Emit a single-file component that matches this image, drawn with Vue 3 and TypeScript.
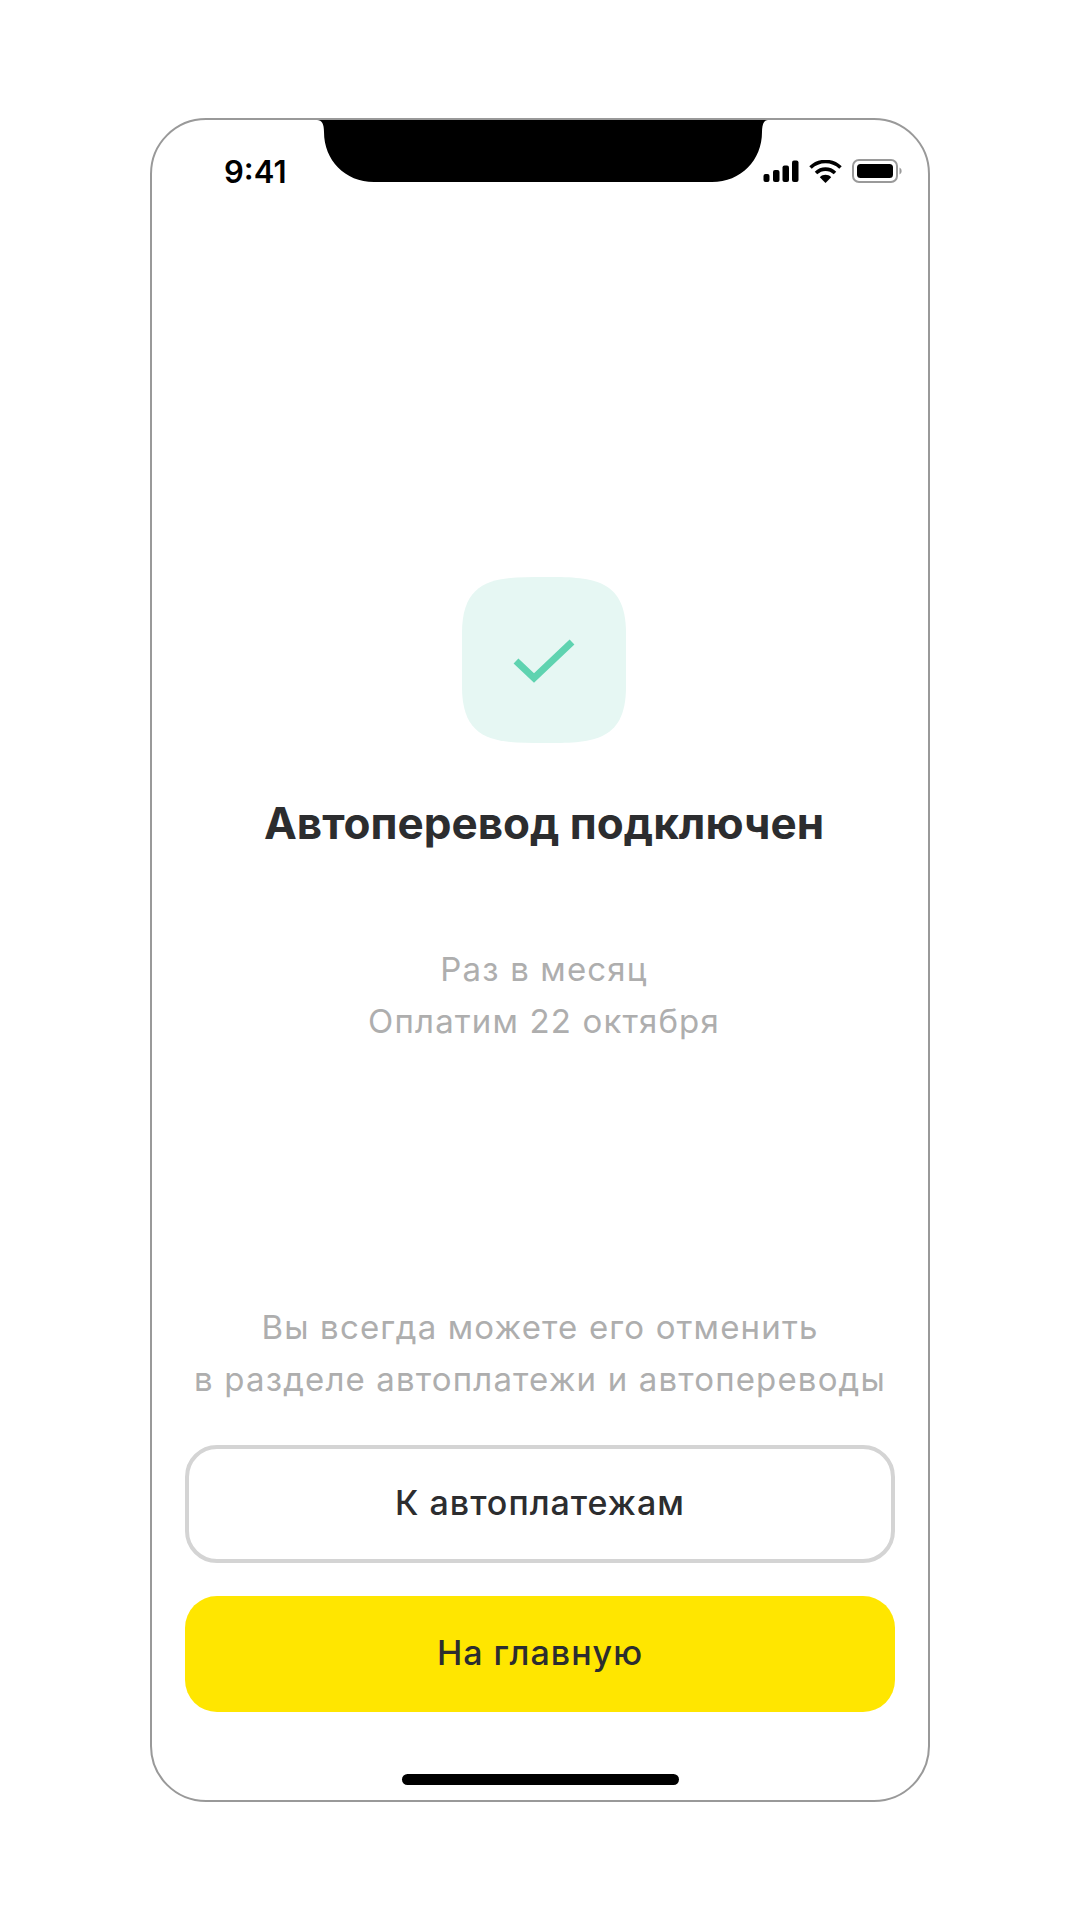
<script setup lang="ts">
const title = "Автоперевод подключен"
const schedule = ["Раз в месяц", "Оплатим 22 октября"]
const hint = ["Вы всегда можете его отменить", "в разделе автоплатежи и автопереводы"]
</script>

<template>
  <div class="page">
    <div class="phone">
      <svg class="notch" width="451" height="62" viewBox="0 0 451 62">
        <path d="M0 0 C5 0 7 4 7 12 C7 40 28 62 57 62 H395 C424 62 445 40 445 12 C445 4 447 0 451 0 Z" />
      </svg>

      <div class="status">
        <span class="time">9:41</span>
        <div class="status-icons">
          <svg width="36" height="22" viewBox="0 0 36 22">
            <rect x="0.5" y="14" width="6" height="8" rx="2" />
            <rect x="10" y="10" width="6.5" height="12" rx="2" />
            <rect x="19.5" y="5.5" width="6.5" height="16.5" rx="2" />
            <rect x="29" y="0.5" width="6.5" height="21.5" rx="2" />
          </svg>
          <svg width="33" height="23" viewBox="0 0 33 23">
            <path d="M1.5 7.5 C 10 -0.5, 23 -0.5, 31.5 7.5" fill="none" stroke="#000" stroke-width="3.6" />
            <path d="M7 13 C 12.5 7.8, 20.5 7.8, 26 13" fill="none" stroke="#000" stroke-width="3.6" />
            <path d="M10.8 17.2 C 14 14, 19 14, 22.2 17.2 L 16.5 23 Z" />
          </svg>
          <svg width="50" height="24" viewBox="0 0 50 24">
            <rect x="1" y="1" width="44" height="22" rx="6" fill="none" stroke="#9a9a9a" stroke-width="2" />
            <rect x="5" y="5" width="36" height="14" rx="3.5" />
            <path d="M47.5 8.5 C 49 9.5, 49.6 10.6, 49.6 12 C 49.6 13.4, 49 14.5, 47.5 15.5 Z" fill="#9a9a9a" />
          </svg>
        </div>
      </div>

      <div class="result">
        <div class="badge">
          <svg width="164" height="166" viewBox="0 0 164 166">
            <path d="M82 0 C 128 0, 164 0, 164 56 C 164 70, 164 96, 164 110 C 164 166, 128 166, 82 166 C 36 166, 0 166, 0 110 C 0 96, 0 70, 0 56 C 0 0, 36 0, 82 0 Z" fill="#e6f7f3" />
            <path d="M54 84 L 72 101 L 110 65" fill="none" stroke="#5fd3b0" stroke-width="7" />
          </svg>
        </div>
        <h1>{{ title }}</h1>
        <p class="note schedule">
          <span v-for="line in schedule" :key="line">{{ line }}</span>
        </p>
      </div>

      <div class="bottom">
        <p class="note hint">
          <span v-for="line in hint" :key="line">{{ line }}</span>
        </p>
        <button class="btn btn-outline">К автоплатежам</button>
        <button class="btn btn-primary">На главную</button>
        <div class="home-bar"></div>
      </div>
    </div>
  </div>
</template>

<style>
html,
body {
  margin: 0;
  background: #fff;
}
</style>

<style scoped>
.page {
  width: 1080px;
  height: 1920px;
  padding-top: 118px;
  box-sizing: border-box;
  font-family: Inter, "Noto Sans", sans-serif;
  color: #2c2d2f;
}

.phone {
  position: relative;
  width: 780px;
  height: 1684px;
  margin-left: 150px;
  box-sizing: border-box;
  border: 2px solid #999;
  border-radius: 56px;
  display: flex;
  flex-direction: column;
}

.notch {
  position: absolute;
  top: 0;
  left: 165px;
}

.status {
  display: flex;
  justify-content: space-between;
  align-items: center;
  height: 64px;
  padding: 0 26px 0 72px;
  margin-top: 19px;
  box-sizing: border-box;
}

.time {
  font-size: 31px;
  font-weight: 600;
  color: #000;
}

.status-icons {
  display: flex;
  align-items: center;
  gap: 10px;
}

.result {
  display: flex;
  flex-direction: column;
  align-items: center;
  padding-left: 8px;
  margin-top: 374px;
}

.badge {
  height: 166px;
}

h1 {
  margin: 54px 0 0;
  font-size: 44px;
  line-height: 52px;
  font-weight: 700;
}

.note {
  margin: 0;
  display: flex;
  flex-direction: column;
  align-items: center;
  font-size: 33px;
  font-weight: 400;
  line-height: 52px;
  letter-spacing: 1.15px;
  color: #aeaeae;
}

.schedule {
  margin-top: 94px;
}

.bottom {
  margin-top: auto;
  display: flex;
  flex-direction: column;
  align-items: center;
  padding-bottom: 15px;
}

.hint {
  margin-bottom: 40px;
}

.btn {
  width: 710px;
  height: 118px;
  padding-bottom: 5px;
  border-radius: 32px;
  box-sizing: border-box;
  border: none;
  font-family: inherit;
  font-size: 34px;
  font-weight: 550;
  letter-spacing: 1px;
  color: #2c2d2f;
}

.btn-outline {
  background: #fff;
  border: 4px solid #d4d4d4;
  margin-bottom: 33px;
}

.btn-primary {
  height: 116px;
  background: #ffe600;
  margin-bottom: 62px;
}

.home-bar {
  width: 277px;
  height: 11px;
  border-radius: 6px;
  background: #000;
}
</style>
